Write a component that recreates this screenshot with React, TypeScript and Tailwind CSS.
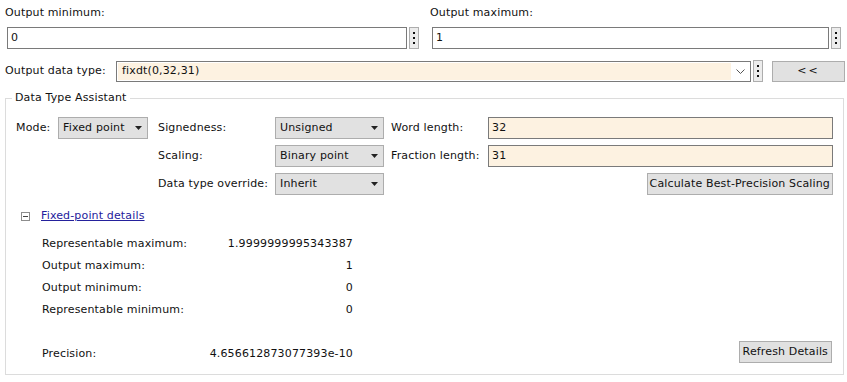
function Dots() {
  return (
    <button className="flex h-[22px] w-[10px] shrink-0 items-center justify-center border border-[#adadad] bg-[#ececec]">
      <svg width="2" height="12" viewBox="0 0 2 12">
        <rect x="0" y="0" width="2" height="2" fill="#111" />
        <rect x="0" y="5" width="2" height="2" fill="#111" />
        <rect x="0" y="10" width="2" height="2" fill="#111" />
      </svg>
    </button>
  );
}

function Select({ value, width }: { value: string; width: string }) {
  return (
    <div
      className={`flex h-[22px] ${width} items-center justify-between border border-[#adadad] bg-[#e1e1e1] pl-[4px] pr-[5px]`}
    >
      <span>{value}</span>
      <svg width="7" height="4" viewBox="0 0 7 4">
        <polygon points="0,0 7,0 3.5,4" fill="#222" />
      </svg>
    </div>
  );
}

function Field({ value }: { value: string }) {
  return (
    <div className="flex h-[22px] w-[345px] items-center border border-[#7a7a7a] bg-[#fdf2e1] pl-[3px]">
      {value}
    </div>
  );
}

const details = [
  ["Representable maximum:", "1.9999999995343387"],
  ["Output maximum:", "1"],
  ["Output minimum:", "0"],
  ["Representable minimum:", "0"],
];

export default function App() {
  return (
    <div className="h-[382px] w-[847px] overflow-hidden bg-white font-['DejaVu_Sans',sans-serif] text-[11px] tracking-[0.15px] text-[#111]">
      {/* output range */}
      <div className="flex">
        <div className="w-[430px] pl-[5px]">
          <div className="mt-[6px] leading-[14px]">Output minimum:</div>
          <div className="mt-[7px] ml-[2px] flex gap-[2px]">
            <div className="flex h-[22px] w-[400px] items-center border border-[#7a7a7a] pl-[3px]">0</div>
            <Dots />
          </div>
        </div>
        <div className="w-[412px]">
          <div className="mt-[6px] leading-[14px]">Output maximum:</div>
          <div className="mt-[7px] ml-[2px] flex gap-[2px]">
            <div className="flex h-[22px] w-[397px] items-center border border-[#7a7a7a] pl-[3px]">1</div>
            <Dots />
          </div>
        </div>
      </div>

      {/* data type */}
      <div className="mt-[11px] flex items-center pl-[5px]">
        <div className="w-[111px]">Output data type:</div>
        <div className="flex h-[21px] w-[635px] items-center border border-[#7a7a7a] bg-white p-[1px]">
          <div className="flex h-full flex-1 items-center bg-[#fdf2e1] pl-[4px]">fixdt(0,32,31)</div>
          <div className="flex w-[18px] items-center justify-center">
            <svg width="9" height="5" viewBox="0 0 9 5">
              <polyline points="0.5,0.5 4.5,4.5 8.5,0.5" fill="none" stroke="#555" strokeWidth="1" />
            </svg>
          </div>
        </div>
        <div className="ml-[2px]">
          <Dots />
        </div>
        <button className="ml-[9px] h-[21px] w-[73px] border border-[#adadad] bg-[#e1e1e1] tracking-[2px]">
          &lt;&lt;
        </button>
      </div>

      {/* assistant */}
      <fieldset className="mt-[9px] ml-[5px] w-[839px] border border-[#dcdcdc] pr-[9px] pb-[9px] pl-[10px]">
        <legend className="ml-[-4px] px-[3px] leading-[14px]">Data Type Assistant</legend>

        <div className="mt-[12px] flex">
          <div className="flex h-[22px] items-center">
            <span className="w-[42px]">Mode:</span>
            <Select value="Fixed point" width="w-[90px]" />
          </div>
          <div className="ml-[10px] grid grid-cols-[117px_109px_104px_345px] gap-y-[6px]">
            <div className="flex items-center">Signedness:</div>
            <Select value="Unsigned" width="w-[109px]" />
            <div className="flex items-center pl-[7px]">Word length:</div>
            <Field value="32" />

            <div className="flex items-center">Scaling:</div>
            <Select value="Binary point" width="w-[109px]" />
            <div className="flex items-center pl-[7px]">Fraction length:</div>
            <Field value="31" />

            <div className="flex items-center">Data type override:</div>
            <Select value="Inherit" width="w-[109px]" />
            <div className="col-span-2 flex justify-end">
              <button className="h-[22px] whitespace-nowrap border border-[#adadad] bg-[#e1e1e1] px-[2px]">
                Calculate Best-Precision Scaling
              </button>
            </div>
          </div>
        </div>

        <div className="mt-[14px] flex items-center leading-[14px]">
          <div className="ml-[5px] flex h-[9px] w-[9px] items-center justify-center border border-[#8d8d8d]">
            <div className="h-px w-[5px] bg-[#444]" />
          </div>
          <a className="ml-[11px] text-[#24219c] underline">Fixed-point details</a>
        </div>

        <div className="mt-[10px] flex items-end justify-between">
          <div className="ml-[26px] w-[311px]">
            {details.map(([k, v]) => (
              <div key={k} className="flex h-[22px] items-center justify-between">
                <span>{k}</span>
                <span>{v}</span>
              </div>
            ))}
            <div className="h-[22px]" />
            <div className="flex h-[22px] items-center justify-between">
              <span>Precision:</span>
              <span>4.656612873077393e-10</span>
            </div>
          </div>
          <button className="mr-[2px] mb-[2px] h-[22px] border border-[#adadad] bg-[#e1e1e1] px-[3px]">
            Refresh Details
          </button>
        </div>
      </fieldset>
    </div>
  );
}
